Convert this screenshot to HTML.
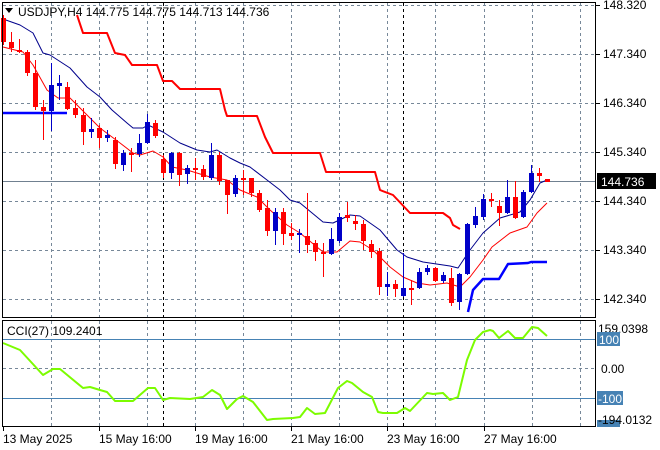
<!DOCTYPE html>
<html><head><meta charset="utf-8"><style>
html,body{margin:0;padding:0;background:#fff;}
svg{display:block;font-family:"Liberation Sans",sans-serif;}
</style></head><body>
<svg id="s" width="660" height="450" viewBox="0 0 660 450" xmlns="http://www.w3.org/2000/svg">
<rect width="660" height="450" fill="#fff"/>
<g id="grid" stroke="#778899" stroke-width="1" stroke-dasharray="3,3" fill="none"></g>
<g id="lines"></g>
<g id="candles"></g>
<g id="frame" fill="none" stroke="#000" stroke-width="1">
<rect x="2.5" y="2.5" width="593" height="315"/>
<rect x="2.5" y="320.5" width="593" height="106"/>
</g>
<g id="axis" font-size="12" fill="#000"></g>
<text x="18" y="16" font-size="12" fill="#000">USDJPY,H4  144.775 144.775 144.713 144.736</text>
<path d="M5 8 L13 8 L9 13 Z" fill="#000"/>
<text x="7" y="335" font-size="12" fill="#000">CCI(27) 109.2401</text>
</svg>
<script>
const NS="http://www.w3.org/2000/svg";
function el(p,t,a,txt){const e=document.createElementNS(NS,t);for(const k in a)e.setAttribute(k,a[k]);if(txt!==undefined)e.textContent=txt;document.getElementById(p).appendChild(e);return e;}
// grid
const gx=[51,99,147,195,243,291,339,387,435,484,532,580];
gx.forEach(x=>{el('grid','line',{x1:x+.5,y1:3,x2:x+.5,y2:317});el('grid','line',{x1:x+.5,y1:321,x2:x+.5,y2:426});});
[5,54,103,152,201,250,299].forEach(y=>el('grid','line',{x1:3,y1:y+.5,x2:595,y2:y+.5}));
el('grid','line',{x1:3,y1:368.5,x2:595,y2:368.5});
[163,403].forEach(x=>{el('grid','line',{x1:x+.5,y1:3,x2:x+.5,y2:317,stroke:'#000'});el('grid','line',{x1:x+.5,y1:321,x2:x+.5,y2:426,stroke:'#000'});});
el('grid','line',{x1:3,y1:339.5,x2:595,y2:339.5,stroke:'#4682b4','stroke-dasharray':'none'});
el('grid','line',{x1:3,y1:398.5,x2:595,y2:398.5,stroke:'#4682b4','stroke-dasharray':'none'});
el('grid','line',{x1:3,y1:181.5,x2:595,y2:181.5,stroke:'#708090','stroke-dasharray':'none'});
function pl(pts,c,w){el('lines','polyline',{points:pts.map(p=>p.join(',')).join(' '),fill:'none',stroke:c,'stroke-width':w,'stroke-linejoin':'round'});}
// red step line
pl([[77,15],[83,33],[107,33],[115,53],[125,55],[132,65],[157,65],[163,81],[172,81],[180,89],[220,89],[225,110],[227,116],[257,116],[265,137],[273,153],[320,153],[326,172],[375,172],[380,190],[393,195],[410,213],[443,213],[450,218],[453,225],[460,229]],'#ff0000',2);
// blue lines
pl([[3,113],[67,113]],'#0000ff',2.5);
pl([[468,312],[473,290],[483,279],[499,279],[508,264],[528,263],[531,262],[547,262]],'#0000ff',2.5);
// navy MA
pl([[3,19],[20,25],[33,33],[43,53],[50,55],[70,68],[87,87],[100,97],[112,110],[127,123],[133,128],[143,128],[148,125],[163,132],[180,143],[197,150],[210,152],[217,150],[230,158],[240,163],[250,167],[267,180],[280,190],[290,200],[300,203],[323,222],[333,223],[350,215],[360,216],[370,223],[380,230],[397,250],[407,257],[423,262],[450,266],[458,268],[470,250],[483,233],[500,218],[520,212],[530,200],[540,183],[547,180]],'#00008b',1);
// red thin MA
pl([[3,47],[23,52],[33,65],[47,90],[58,98],[70,98],[87,115],[100,128],[120,143],[133,153],[140,155],[153,151],[163,157],[172,167],[187,170],[210,177],[227,180],[240,190],[257,197],[270,210],[287,225],[300,233],[323,252],[337,252],[350,241],[360,242],[373,250],[390,267],[403,277],[417,283],[430,285],[447,283],[460,287],[470,277],[483,260],[492,247],[510,233],[527,227],[537,213],[547,203]],'#ff0000',1);
// CCI
pl([[3,343],[20,350],[43,375],[53,369],[60,369],[83,388],[90,387],[100,390],[107,392],[115,401],[133,401],[148,388],[155,388],[163,400],[170,398],[190,399],[203,397],[212,390],[220,395],[227,409],[237,399],[243,396],[253,402],[267,420],[273,419],[293,418],[300,417],[307,408],[315,414],[325,413],[338,388],[347,381],[352,383],[363,392],[372,397],[378,412],[383,413],[397,413],[405,408],[410,411],[427,393],[433,394],[443,393],[450,400],[458,397],[467,360],[475,340],[483,332],[490,330],[493,331],[499,338],[508,331],[515,338],[523,338],[532,327],[538,328],[547,336]],'#7cfc00',2);
// candles [open, close, high, low]
const C=[[18,42,15,45],[42,48,32,52],[50,52,39,53],[52,73,50,76],[73,107,60,110],[107,111,100,140],[111,85,63,131],[86,83,75,100],[87,109,82,110],[108,115,100,118],[115,132,108,145],[132,129,118,138],[128,138,125,148],[138,135,130,142],[140,164,137,169],[165,153,150,171],[153,154,148,172],[154,143,134,157],[143,122,114,144],[123,136,120,138],[159,173,155,178],[173,153,152,179],[153,175,152,186],[174,168,165,184],[168,170,158,180],[169,177,165,180],[178,155,143,180],[155,181,152,185],[180,195,180,214],[194,178,175,197],[178,180,170,195],[178,193,178,197],[193,210,190,212],[208,231,200,236],[231,212,208,245],[212,234,208,245],[233,236,223,240],[235,233,229,253],[236,245,193,253],[243,252,240,261],[252,253,243,277],[254,239,228,255],[241,217,213,243],[215,218,202,222],[221,224,215,230],[224,241,220,250],[244,252,240,258],[251,287,248,295],[287,284,272,296],[284,289,280,297],[296,288,253,297],[288,289,280,305],[288,272,268,289],[272,268,265,275],[268,281,267,282],[281,275,272,283],[278,303,268,306],[302,274,273,310],[274,224,223,275],[225,216,207,228],[217,199,194,220],[199,200,193,207],[206,213,200,226],[213,197,180,214],[197,218,181,219],[217,192,190,218],[192,173,165,193],[173,176,168,182],[179,182,179,182]];
C.forEach((c,i)=>{const x=3+8*i;const up=c[1]<c[0];const col=up?'#0000c8':'#ff0000';
el('candles','line',{x1:x+.5,y1:c[2],x2:x+.5,y2:c[3],stroke:col,'stroke-width':1});
const t=Math.min(c[0],c[1]),h=Math.max(2,Math.abs(c[1]-c[0]));
el('candles','rect',{x:x-2,y:t,width:5,height:h,fill:col});});
// axis
const pl2=[[5,'148.320'],[54,'147.340'],[103,'146.340'],[152,'145.340'],[201,'144.340'],[250,'143.340'],[299,'142.340']];
pl2.forEach(p=>{el('axis','line',{x1:596,y1:p[0]+.5,x2:600,y2:p[0]+.5,stroke:'#000'});el('axis','text',{x:603,y:p[0]+4},p[1]);});
el('axis','rect',{x:597,y:173,width:59,height:16,fill:'#000'});
el('axis','text',{x:601,y:186,fill:'#fff'},'144.736');
el('axis','text',{x:598,y:333},'159.0398');
el('axis','rect',{x:597,y:332,width:23,height:14,fill:'#4682b4'});
el('axis','text',{x:599,y:344,fill:'#fff'},'100');
el('axis','text',{x:601,y:373},'0.00');
el('axis','rect',{x:597,y:391,width:26,height:14,fill:'#4682b4'});
el('axis','text',{x:598,y:403,fill:'#fff'},'-100');
el('axis','rect',{x:597,y:420,width:23,height:7,fill:'#4682b4'});
el('axis','text',{x:598,y:424},'-194.0132');
[[3,'13 May 2025'],[99,'15 May 16:00'],[195,'19 May 16:00'],[291,'21 May 16:00'],[387,'23 May 16:00'],[484,'27 May 16:00']].forEach(d=>{
el('axis','line',{x1:d[0]+.5,y1:427,x2:d[0]+.5,y2:431,stroke:'#000'});el('axis','text',{x:d[0],y:443},d[1]);});
</script>
</body></html>
